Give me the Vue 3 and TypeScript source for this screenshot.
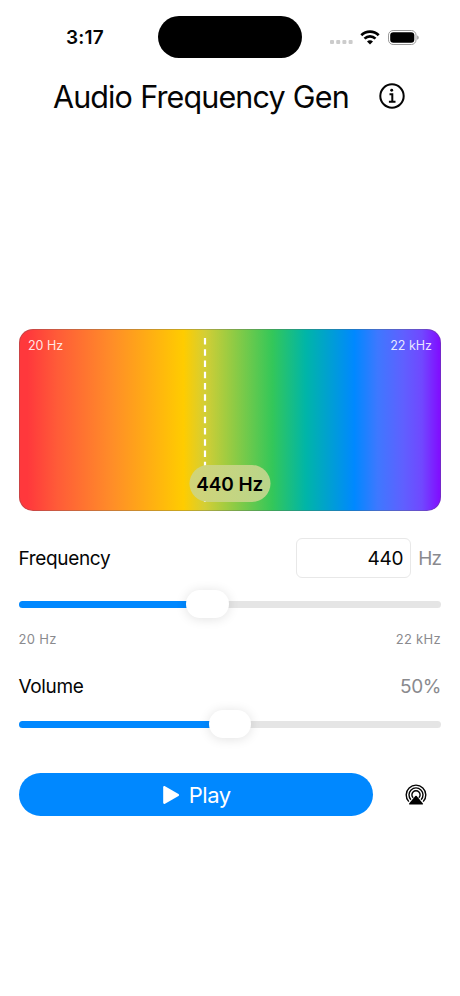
<script setup lang="ts">
import { computed, ref } from 'vue'

const frequency = ref<number>(440)
const volume = ref<number>(50)
const playing = ref<boolean>(false)

const minHz = 20
const maxHz = 22000

const position = computed<number>(
  () => Math.log(frequency.value / minHz) / Math.log(maxHz / minHz),
)
const markerStyle = computed(() => ({ left: `${position.value * 100}%` }))

const trackWidth = 422.5
const thumbWidth = 42.5
const offset = (ratio: number): string => `${ratio * (trackWidth - thumbWidth)}px`
const frequencyThumb = computed(() => ({ marginLeft: offset(position.value) }))
const volumeThumb = computed(() => ({ marginLeft: offset(volume.value / 100) }))
const fill = (ratio: number): string => `${ratio * (trackWidth - thumbWidth) + thumbWidth / 2}px`
</script>

<template>
  <main class="screen">
    <div class="status">
      <span class="time">3:17</span>
      <div class="island"></div>
      <div class="indicators">
        <svg class="signal" width="23" height="4" viewBox="0 0 23 4">
          <rect x="0" y="0" width="4" height="4" rx="1" />
          <rect x="6.2" y="0" width="4" height="4" rx="1" />
          <rect x="12.4" y="0" width="4" height="4" rx="1" />
          <rect x="18.6" y="0" width="4" height="4" rx="1" />
        </svg>
        <svg class="wifi" width="20" height="15" viewBox="0 0 20 15">
          <path d="M1.3 5.3C6.2.5 13.8.5 18.7 5.3" />
          <path d="M4.5 8.6c3.2-3.1 7.8-3.1 11 0" />
          <path class="solid" d="M7 11.4c1.8-1.5 4.2-1.5 6 0L10 14.5z" />
        </svg>
        <svg class="battery" width="31" height="15" viewBox="0 0 31 15">
          <rect class="case" x=".5" y=".5" width="27.5" height="14" rx="4.6" />
          <rect x="2.2" y="2.2" width="24.1" height="10.6" rx="3.2" />
          <path class="cap" d="M29.3 5.4c1.7.5 1.7 3.7 0 4.2z" />
        </svg>
      </div>
    </div>

    <header class="header">
      <h1>Audio Frequency Gen</h1>
      <svg class="info" width="26" height="26" viewBox="0 0 26 26">
        <circle class="ring" cx="13" cy="13" r="11.7" />
        <circle cx="12.7" cy="7.3" r="1.45" />
        <path class="ring" d="M10.5 11.2h2.8v7.4M9.9 18.8h6.6" />
      </svg>
    </header>

    <section class="spectrum">
      <div class="ends"><span>20 Hz</span><span>22 kHz</span></div>
      <div class="marker-area">
        <svg class="marker" :style="markerStyle" width="3" height="167" viewBox="0 0 3 167">
          <path d="M1.5 0V167" />
        </svg>
      </div>
      <div class="reading">{{ frequency }} Hz</div>
    </section>

    <section class="frequency">
      <div class="row">
        <span class="label">Frequency</span>
        <div class="entry">
          <div class="field">{{ frequency }}</div>
          <span class="unit">Hz</span>
        </div>
      </div>
      <div class="slider">
        <div class="track"><div class="fill" :style="{ width: fill(position) }"></div></div>
        <div class="thumb" :style="frequencyThumb"></div>
      </div>
      <div class="range"><span>20 Hz</span><span>22 kHz</span></div>
    </section>

    <section class="volume">
      <div class="row">
        <span class="label">Volume</span>
        <span class="percent">{{ volume }}%</span>
      </div>
      <div class="slider">
        <div class="track"><div class="fill" :style="{ width: fill(volume / 100) }"></div></div>
        <div class="thumb" :style="volumeThumb"></div>
      </div>
    </section>

    <footer class="actions">
      <button class="play" @click="playing = !playing">
        <svg width="18" height="20" viewBox="0 0 18 20">
          <path d="M1.2 2.3v15.4c0 1 .9 1.5 1.8 1L16.5 11c.8-.5.8-1.5 0-2L3 1.3c-.9-.5-1.8 0-1.8 1z" />
        </svg>
        <span>Play</span>
      </button>
      <svg class="airplay" width="22" height="21" viewBox="0 0 22 21">
        <path d="M3.8 17.6A9.8 9.8 0 1 1 18.2 17.6" />
        <path d="M5.9 15.7A7 7 0 1 1 16.1 15.7" />
        <path d="M8.2 13.8A4.1 4.1 0 1 1 13.8 13.8" />
        <path class="solid" d="M10.3 12q.7-.7 1.4 0l6.2 7.4q.6 1.1-.6 1.1H4.7q-1.2 0-.6-1.1z" />
      </svg>
    </footer>
  </main>
</template>

<style>
body {
  background: #fff;
}
</style>

<style scoped>
.screen {
  box-sizing: border-box;
  width: 460px;
  height: 996px;
  padding: 16px 19px 0 18.5px;
  overflow: hidden;
  background: #fff;
  color: #050505;
  font-family: Inter, "Liberation Sans", sans-serif;
}
.status {
  display: grid;
  grid-template-columns: 139.5px 144px 1fr;
  height: 42px;
  align-items: center;
}
.time {
  padding-left: 47.5px;
  font-size: 19px;
  font-weight: 600;
  letter-spacing: 0.2px;
}
.island {
  height: 42px;
  border-radius: 21px;
  background: #000;
}
.indicators {
  display: flex;
  align-items: center;
  padding-left: 27.5px;
}
.signal {
  margin: 10px 7.5px 0 0;
  fill: #ccc;
}
.wifi {
  margin-right: 8px;
  fill: none;
  stroke: #000;
  stroke-width: 2.7;
}
.solid {
  fill: #000;
  stroke: none;
}
.case {
  fill: none;
  stroke: #999;
}
.cap {
  fill: #888;
}
.header {
  display: flex;
  align-items: center;
  height: 76px;
  padding-left: 34.5px;
}
h1 {
  width: 326px;
  margin: 2px 0 0;
  font-size: 30.5px;
  font-weight: 400;
  line-height: 38px;
  letter-spacing: -0.88px;
  word-spacing: 0.5px;
  white-space: nowrap;
}
.info {
  fill: #050505;
}
.ring {
  fill: none;
  stroke: #050505;
  stroke-width: 2;
}
.spectrum {
  position: relative;
  box-sizing: border-box;
  height: 182px;
  margin-top: 195px;
  border: 1px solid rgba(90, 90, 90, 0.32);
  border-radius: 14px;
  background: linear-gradient(90deg, #ff383c 2%, #ff5b38 9%, #ff8d28 22%, #ffcc00 39%, #d4ce35 44%, #34c759 60%, #00b5a8 68%, #0088ff 79.5%, #3e78ff 85%, #5f60ff 91%, #7048ff 95.5%, #8010ff 99.5%) border-box;
}
.ends {
  display: flex;
  justify-content: space-between;
  padding: 8px 8px 0 8.5px;
  color: rgba(255, 255, 255, 0.87);
  font-size: 12.5px;
  line-height: 16px;
}
.marker-area {
  position: absolute;
  top: 8px;
  right: 0;
  left: 0;
}
.marker {
  position: absolute;
  transform: translateX(-1.5px);
  fill: none;
  stroke: #fff;
  stroke-width: 2.4;
  stroke-dasharray: 6.6 4.65;
}
.reading {
  position: absolute;
  bottom: 8px;
  left: 50%;
  width: 81px;
  height: 37px;
  border-radius: 18.5px;
  background: linear-gradient(90deg, #d2d478, #b8d58a);
  color: #000;
  font-size: 19px;
  font-weight: 600;
  line-height: 39px;
  letter-spacing: -0.1px;
  text-align: center;
  white-space: nowrap;
  transform: translateX(-50%);
}
.frequency {
  margin-top: 27px;
}
.row {
  display: flex;
  align-items: center;
  justify-content: space-between;
}
.label {
  font-size: 19px;
  letter-spacing: -0.35px;
}
.entry {
  display: flex;
  align-items: center;
  gap: 7px;
}
.frequency .label,
.unit {
  padding-top: 1px;
}
.field {
  box-sizing: border-box;
  width: 115px;
  height: 40px;
  padding-right: 7px;
  border: 1px solid #e8e8e8;
  border-radius: 6px;
  font-size: 19px;
  line-height: 40px;
  text-align: right;
  letter-spacing: -0.3px;
}
.unit,
.percent {
  color: #8a8a8e;
  font-size: 19px;
  letter-spacing: -0.4px;
}
.unit {
  letter-spacing: -0.9px;
}
.slider {
  display: grid;
  align-items: center;
  height: 28px;
  margin-top: 12px;
}
.track,
.thumb {
  grid-area: 1 / 1;
}
.track {
  height: 7px;
  overflow: hidden;
  border-radius: 4px;
  background: #e5e5e5;
}
.fill {
  height: 7px;
  background: #0088ff;
}
.thumb {
  width: 42.5px;
  height: 28px;
  border-radius: 14px;
  background: #fff;
  box-shadow: 0 1px 12px rgba(0, 0, 0, 0.12);
}
.range {
  display: flex;
  justify-content: space-between;
  margin-top: 13px;
  color: #8a8a8e;
  font-size: 13px;
  line-height: 16px;
  letter-spacing: 0.3px;
}
.volume {
  margin-top: 27px;
}
.volume .row {
  height: 24px;
}
.actions {
  display: flex;
  align-items: center;
  margin-top: 35px;
}
.play {
  display: flex;
  align-items: center;
  justify-content: center;
  gap: 9px;
  width: 354.5px;
  height: 43px;
  padding: 0 0 0 1px;
  border: 0;
  border-radius: 21.5px;
  background: #0088ff;
  color: #fff;
  font: 400 22px/26px Inter, sans-serif;
  letter-spacing: -0.4px;
}
.play svg {
  fill: #fff;
}
.airplay {
  margin-left: 32px;
  fill: none;
  stroke: #050505;
  stroke-width: 1.4;
}
</style>
